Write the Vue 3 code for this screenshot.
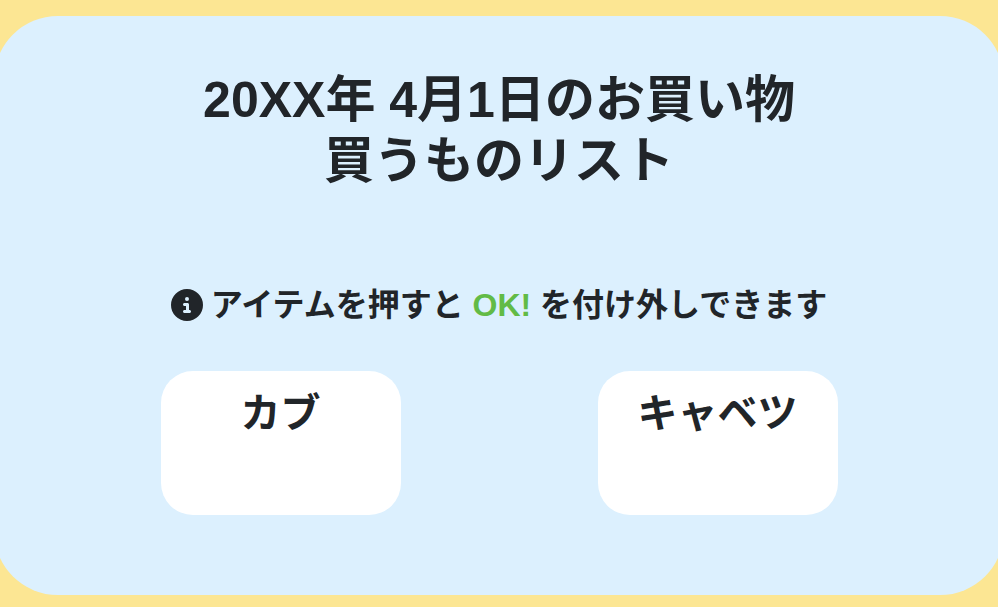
<template>
  <main class="page">
    <section class="list-card">
      <h1 class="title">
        {{ shoppingDate }}のお買い物<br />
        買うものリスト
      </h1>

      <p class="guide">
        <svg class="info-icon" viewBox="0 0 512 512" aria-hidden="true">
          <path
            fill="currentColor"
            d="M256 512A256 256 0 1 0 256 0a256 256 0 1 0 0 512zM216 336h24V272H216c-13.300 0-24-10.700-24-24s10.700-24 24-24h48c13.300 0 24 10.700 24 24v88h8c13.300 0 24 10.700 24 24s-10.700 24-24 24H216c-13.300 0-24-10.700-24-24s10.700-24 24-24zm40-208a32 32 0 1 1 0 64 32 32 0 1 1 0-64z"
          />
        </svg>
        <span>アイテムを押すと <span class="ok">OK!</span> を付け外しできます</span>
      </p>

      <div class="items">
        <button
          v-for="item in items"
          :key="item.id"
          type="button"
          class="item"
          :aria-pressed="item.checked"
          @click="toggle(item)"
        >
          <span>{{ item.name }}</span>
          <span v-if="item.checked" class="ok">OK!</span>
        </button>
      </div>
    </section>
  </main>
</template>

<script setup>
import { ref } from 'vue'

const shoppingDate = '20XX年 4月1日'

const items = ref([
  { id: 1, name: 'カブ', checked: false },
  { id: 2, name: 'キャベツ', checked: false },
])

// OK! の付け外し
function toggle(item) {
  item.checked = !item.checked
}
</script>

<style>
body {
  margin: 0;
  background: #fce693;
}
</style>

<style scoped>
.page {
  padding: 16px 0 12px;
  overflow: hidden;
  color: #212529;
  font-family: "Liberation Sans", "Noto Sans CJK JP", sans-serif;
  font-weight: 700;
}

.list-card {
  margin: 0 -6px;
  padding: 54px 68px 80px;
  border-radius: 64px;
  background: #dcf0fe;
  text-align: center;
}

.title {
  margin: 0;
  font-size: 50px;
  line-height: 61px;
}

.guide {
  display: flex;
  align-items: center;
  justify-content: center;
  gap: 8px;
  margin: 89px 0 42px;
  font-size: 32px;
  line-height: 48px;
}

.info-icon {
  flex: none;
  width: 32px;
  height: 32px;
}

.ok {
  color: #62bb46;
}

.items {
  display: grid;
  grid-template-columns: 1fr 1fr;
  justify-items: center;
}

.item {
  display: flex;
  flex-direction: column;
  align-items: center;
  width: 240px;
  height: 144px;
  padding: 18px 0;
  border: none;
  border-radius: 32px;
  background: #fff;
  color: inherit;
  font: inherit;
  font-size: 40px;
  line-height: 48px;
  cursor: pointer;
}
</style>
